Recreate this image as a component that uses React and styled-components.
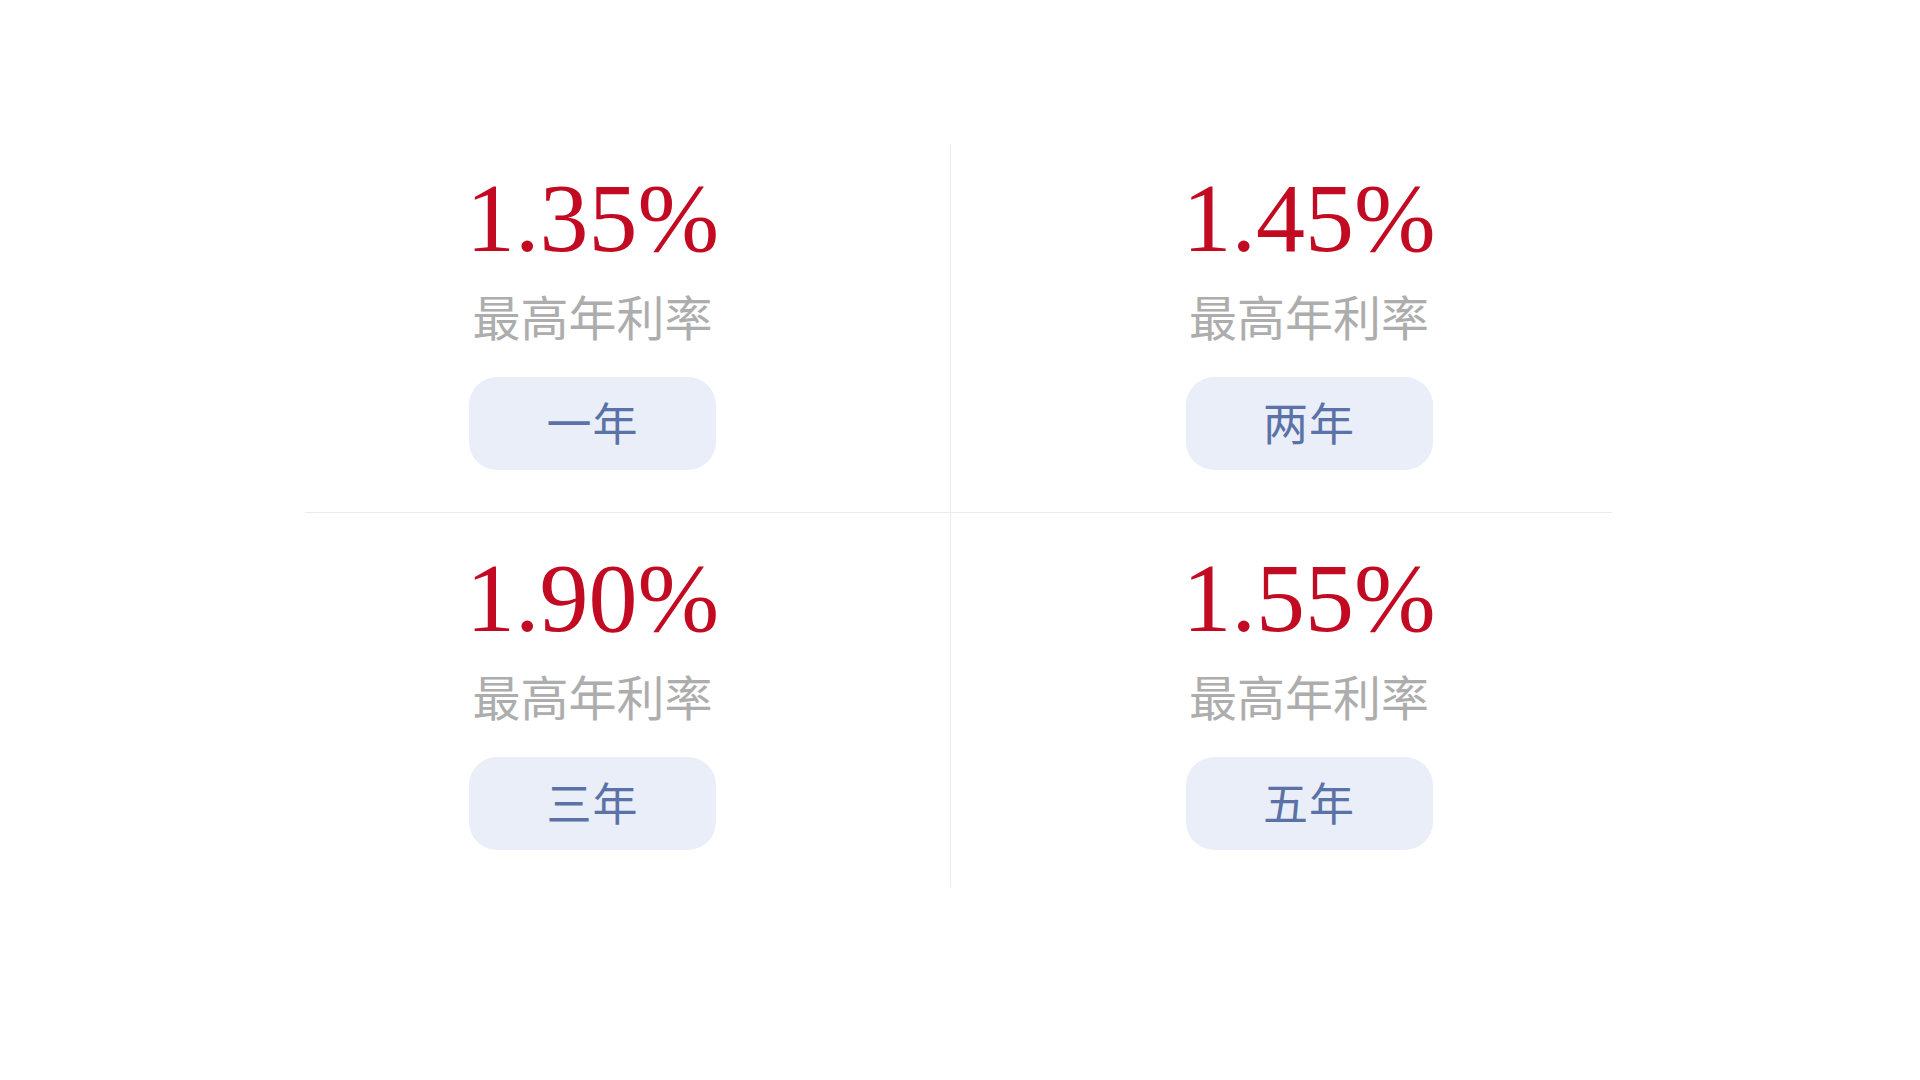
import React from 'react';
import styled, { createGlobalStyle } from 'styled-components';

const GlobalStyle = createGlobalStyle`
  body {
    margin: 0;
    background: #fff;
    font-family: 'Noto Sans CJK SC', 'Noto Sans', sans-serif;
  }
  *, *::before, *::after {
    box-sizing: border-box;
  }
`;

const Page = styled.div`
  width: 1920px;
  height: 1080px;
  padding: 144px 0 0 235px;
  background: #fff;
`;

const Board = styled.div`
  display: grid;
  grid-template-columns: 716px 716px;
  width: 1433px;
`;

const Cell = styled.div`
  display: flex;
  flex-direction: column;
  align-items: center;
  padding-top: ${p => p.$top}px;
  height: ${p => p.$height}px;
  border-right: ${p => (p.$divider ? '1px solid #ececec' : 'none')};
`;

const HLine = styled.div`
  grid-column: 1 / -1;
  height: 1px;
  margin: 0 55px 0 70px;
  background: #ececec;
`;

const Rate = styled.div`
  font-family: 'Liberation Serif', 'Times New Roman', serif;
  font-size: 98px;
  line-height: 100px;
  height: 100px;
  color: #c20b22;
`;

const Label = styled.div`
  margin-top: 23px;
  font-size: 48px;
  line-height: 48px;
  height: 48px;
  color: #adadad;
`;

const Term = styled.div`
  margin-top: 38px;
  width: 247px;
  height: 93px;
  padding-bottom: 4px;
  border-radius: 28px;
  background: #e9eef9;
  color: #5a72a6;
  font-size: 45px;
  display: flex;
  align-items: center;
  justify-content: center;
  letter-spacing: 1px;
`;

const rows = [
  { top: 24, height: 368, items: [['1.35%', '一年'], ['1.45%', '两年']] },
  { top: 35, height: 374, items: [['1.90%', '三年'], ['1.55%', '五年']] },
];

export default function App() {
  return (
    <Page>
      <GlobalStyle />
      <Board>
        {rows.map((row, r) => (
          <React.Fragment key={r}>
            {r > 0 && <HLine />}
            {row.items.map(([rate, term], i) => (
              <Cell key={term} $top={row.top} $height={row.height} $divider={i === 0}>
                <Rate>{rate}</Rate>
                <Label>最高年利率</Label>
                <Term>{term}</Term>
              </Cell>
            ))}
          </React.Fragment>
        ))}
      </Board>
    </Page>
  );
}
